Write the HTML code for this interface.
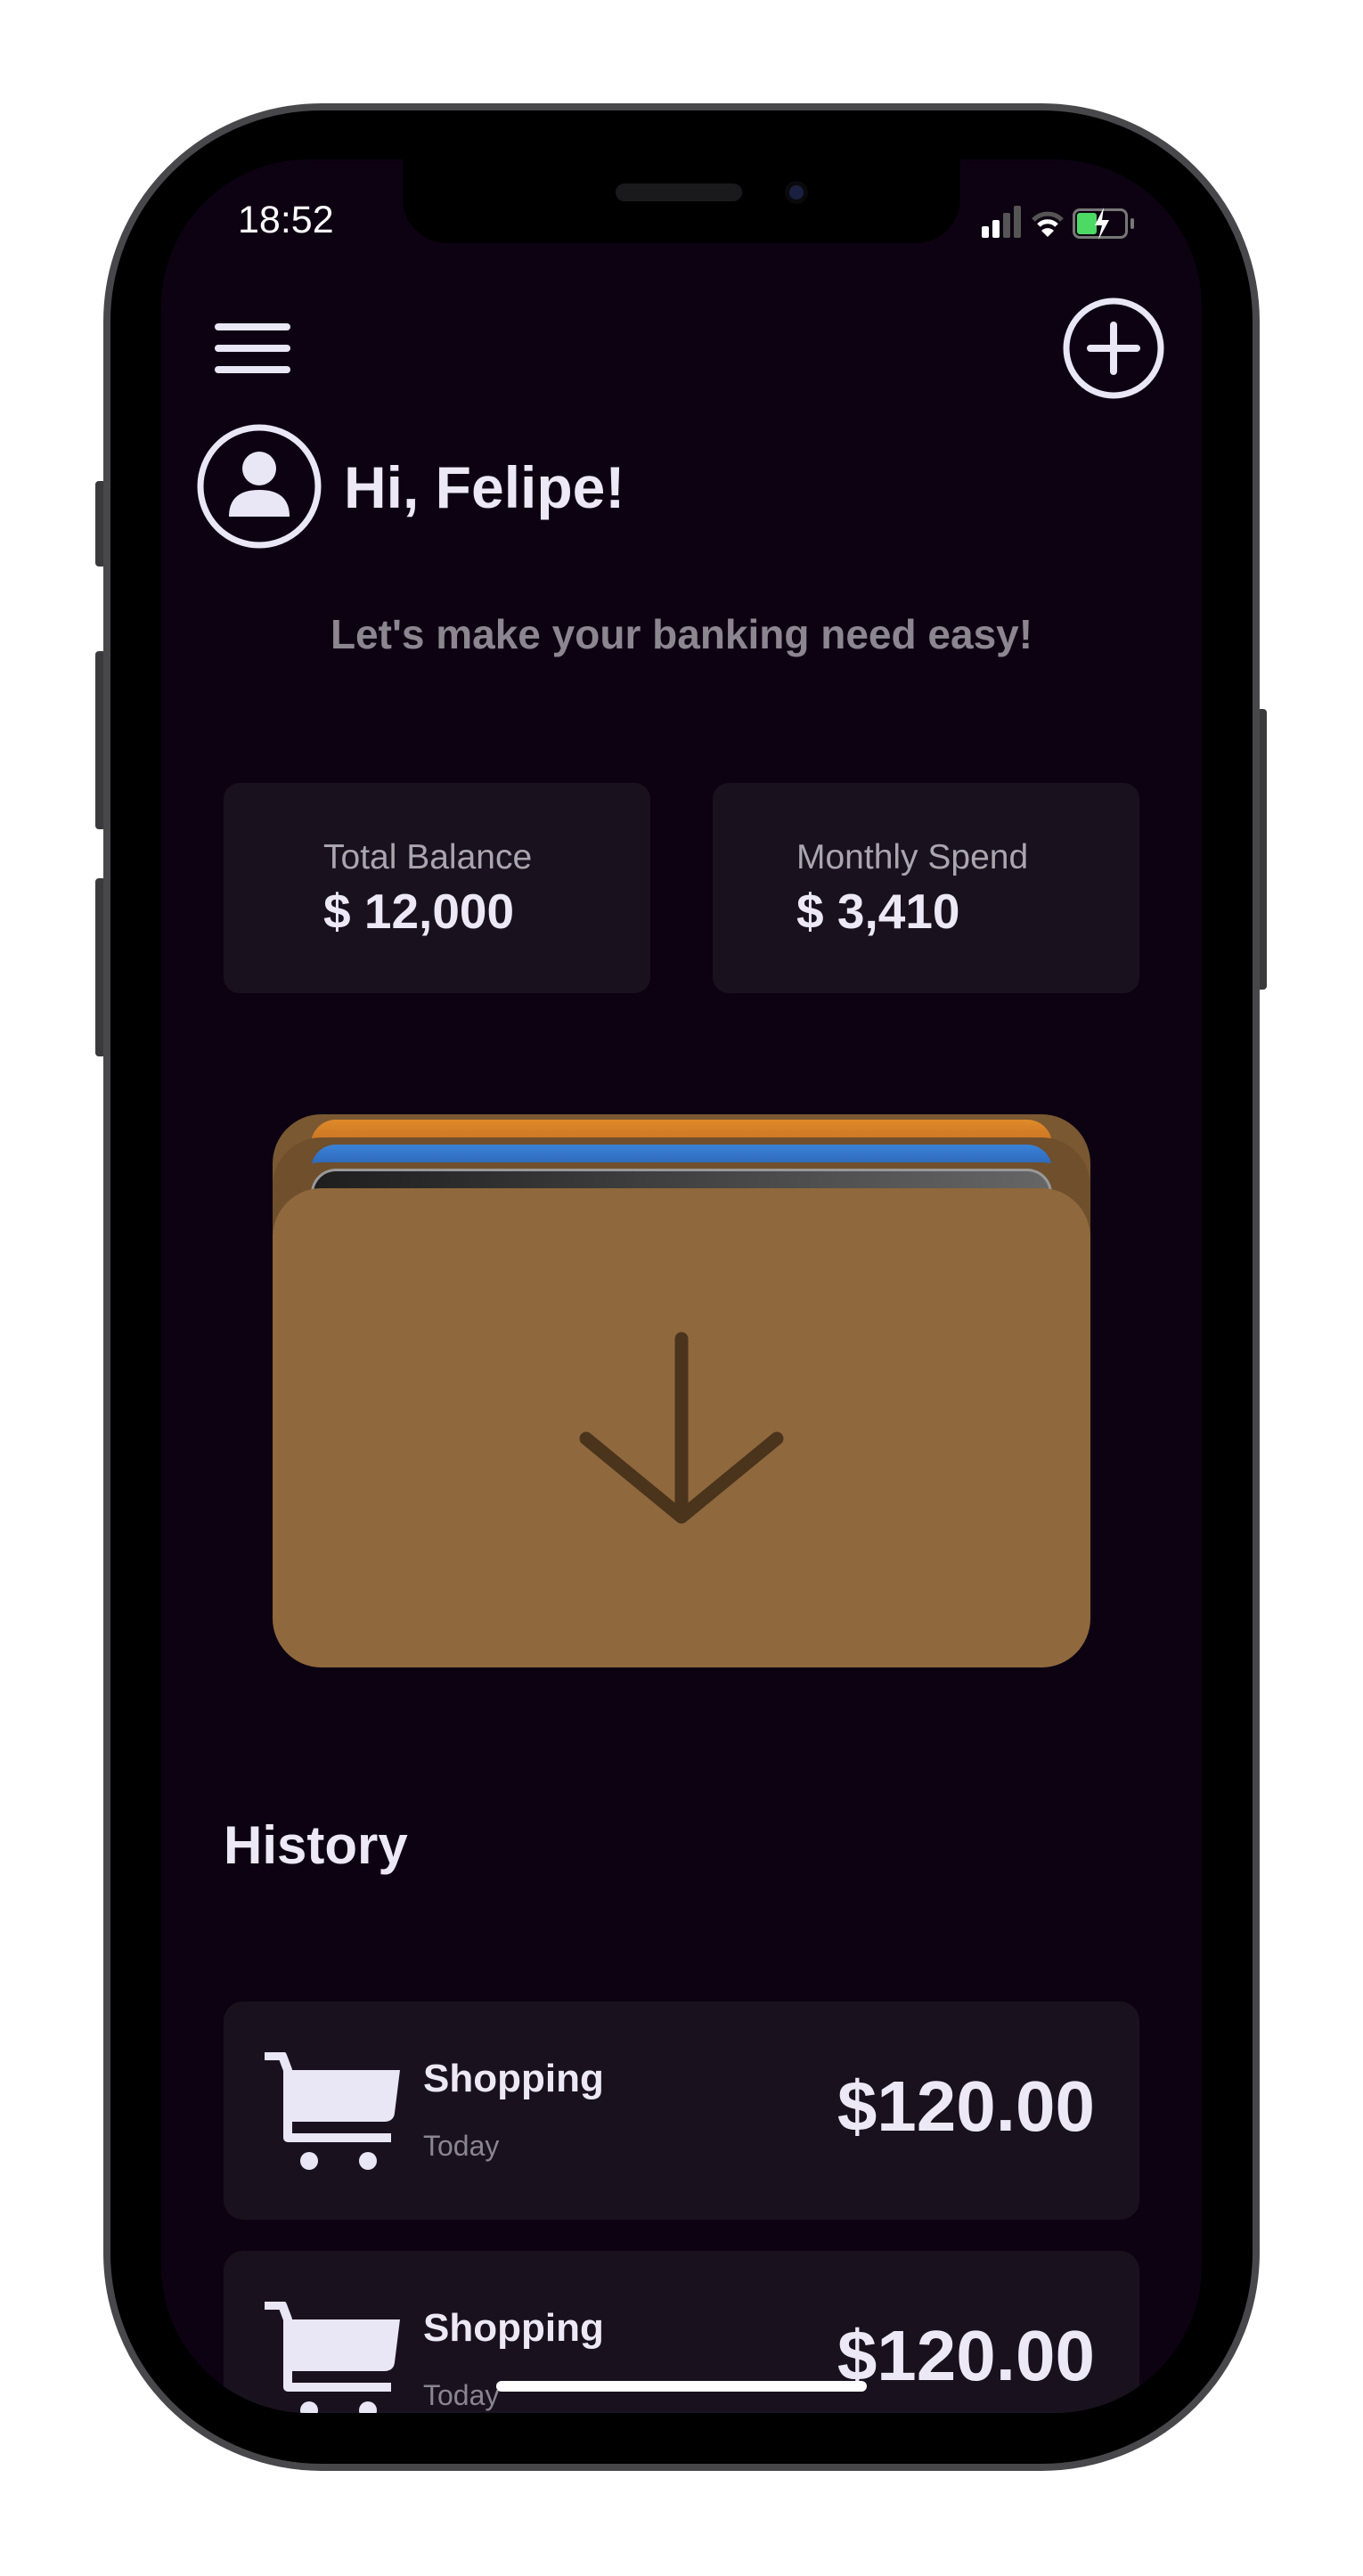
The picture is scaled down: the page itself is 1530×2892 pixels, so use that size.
<!DOCTYPE html>
<html><head><meta charset="utf-8"><style>
*{margin:0;padding:0;box-sizing:border-box}
body{width:1530px;height:2892px;background:#fff;position:relative;overflow:hidden;font-family:"Liberation Sans",sans-serif}
.a{position:absolute}
.btn{position:absolute;background:#3a3a3c;border-radius:4px}
.frame{left:116px;top:116px;width:1298px;height:2658px;border-radius:245px;background:#000;border:8px solid #48484b}
.screen{left:181px;top:179px;width:1168px;height:2530px;border-radius:165px;background:#0d0212;overflow:hidden}
.card{background:#1a111f;border-radius:18px}
.lbl{color:#aaa5ae;font-size:39px}
.val{color:#ece8f6;font-size:55px;font-weight:bold}
.row{left:70px;width:1028px;height:245px;background:#1a111f;border-radius:22px}
.shop{color:#ece8f6;font-size:44px;font-weight:bold}
.today{color:#8a8590;font-size:32px}
.amt{color:#ece8f6;font-size:80px;font-weight:bold;text-align:right}
</style></head><body>
<div class="btn" style="left:107px;top:540px;width:12px;height:96px"></div>
<div class="btn" style="left:107px;top:731px;width:12px;height:200px"></div>
<div class="btn" style="left:107px;top:986px;width:12px;height:200px"></div>
<div class="btn" style="left:1410px;top:796px;width:12px;height:315px"></div>
<div class="a frame"></div>
<div class="a screen">
  <div class="a" style="left:271px;top:-10px;width:626px;height:104px;background:#000;border-radius:0 0 50px 50px"></div>
  <div class="a" style="left:510px;top:27px;width:142px;height:20px;background:#1a1a1c;border-radius:10px"></div>
  <div class="a" style="left:700px;top:24px;width:26px;height:26px;background:#1b2040;border-radius:50%;border:5px solid #0a0a0c"></div>
  <div class="a" style="left:86px;top:44px;color:#fff;font-size:43px">18:52</div>
  <div class="a" style="left:921px;top:75px;width:8px;height:13px;background:#fff;border-radius:2px"></div>
  <div class="a" style="left:933px;top:68px;width:8px;height:20px;background:#fff;border-radius:2px"></div>
  <div class="a" style="left:945px;top:60px;width:8px;height:28px;background:#555;border-radius:2px"></div>
  <div class="a" style="left:957px;top:52px;width:8px;height:36px;background:#555;border-radius:2px"></div>
  <svg class="a" style="left:975px;top:54px" width="40" height="36" viewBox="0 0 40 36"><path d="M4 14 A22 22 0 0 1 36 14" stroke="#555" stroke-width="5" fill="none"/><path d="M10 20 A14 14 0 0 1 30 20" stroke="#fff" stroke-width="5" fill="none"/><path d="M20 33 L13 26 A10 10 0 0 1 27 26Z" fill="#fff"/></svg>
  <div class="a" style="left:1023px;top:55px;width:62px;height:34px;border:3px solid #777;border-radius:8px"></div>
  <div class="a" style="left:1028px;top:60px;width:22px;height:24px;background:#4cd964;border-radius:3px"></div>
  <div class="a" style="left:1088px;top:66px;width:4px;height:12px;background:#777;border-radius:2px"></div>
  <svg class="a" style="left:1044px;top:52px" width="24" height="40" viewBox="0 0 24 40"><path d="M14 2 L4 22 L12 22 L8 38 L20 16 L12 16Z" fill="#fff"/></svg>
  <div class="a" style="left:60px;top:184px;width:85px;height:8px;background:#e9e6f5;border-radius:4px"></div>
  <div class="a" style="left:60px;top:208px;width:85px;height:8px;background:#e9e6f5;border-radius:4px"></div>
  <div class="a" style="left:60px;top:232px;width:85px;height:8px;background:#e9e6f5;border-radius:4px"></div>
  <svg class="a" style="left:1009px;top:152px" width="120" height="120" viewBox="0 0 120 120"><circle cx="60" cy="60" r="53" stroke="#e9e6f5" stroke-width="7" fill="none"/><path d="M60 34V86M34 60H86" stroke="#e9e6f5" stroke-width="8" stroke-linecap="round"/></svg>
  <svg class="a" style="left:40px;top:297px" width="140" height="140" viewBox="0 0 140 140"><circle cx="70" cy="70" r="66" stroke="#e9e6f5" stroke-width="7" fill="none"/><circle cx="70" cy="50" r="19" fill="#e9e6f5"/><path d="M36 104 Q36 74 70 74 Q104 74 104 104Z" fill="#e9e6f5"/></svg>
  <div class="a" style="left:205px;top:330px;color:#ece8f6;font-size:66px;font-weight:bold">Hi, Felipe!</div>
  <div class="a" style="left:0;width:1168px;top:506px;text-align:center;color:#8c8690;font-size:46px;font-weight:bold">Let's make your banking need easy!</div>
  <div class="a card" style="left:70px;top:700px;width:479px;height:236px"></div>
  <div class="a card" style="left:619px;top:700px;width:479px;height:236px"></div>
  <div class="a lbl" style="left:182px;top:762px">Total Balance</div>
  <div class="a val" style="left:182px;top:812px">$ 12,000</div>
  <div class="a lbl" style="left:713px;top:762px">Monthly Spend</div>
  <div class="a val" style="left:713px;top:812px">$ 3,410</div>
  <div class="a" style="left:125px;top:1072px;width:918px;height:400px;background:#7a5832;border-radius:55px"></div>
  <div class="a" style="left:168px;top:1078px;width:832px;height:60px;background:linear-gradient(#e08a2a,#a8561c);border-radius:28px 28px 0 0"></div>
  <div class="a" style="left:125px;top:1098px;width:918px;height:400px;background:#6f4f2c;border-radius:55px"></div>
  <div class="a" style="left:168px;top:1106px;width:832px;height:60px;background:linear-gradient(#3a82d8,#1c3e86);border-radius:28px 28px 0 0"></div>
  <div class="a" style="left:125px;top:1126px;width:918px;height:400px;background:#6f4f2c;border-radius:55px"></div>
  <div class="a" style="left:168px;top:1133px;width:832px;height:60px;background:linear-gradient(90deg,#1e1e1e,#666);border:3px solid #999;border-bottom:none;border-radius:28px 28px 0 0"></div>
  <div class="a" style="left:125px;top:1155px;width:918px;height:538px;background:#8f683d;border-radius:55px"></div>
  <svg class="a" style="left:460px;top:1310px" width="250" height="240" viewBox="0 0 250 240"><path d="M124 14V214M17 126L124 214L231 126" stroke="#4a341c" stroke-width="15" stroke-linecap="round" stroke-linejoin="round" fill="none"/></svg>
  <div class="a" style="left:70px;top:1858px;color:#ece8f6;font-size:60px;font-weight:bold">History</div>
  <div class="a row" style="top:2068px"></div>
  <div class="a row" style="top:2348px;height:300px"></div>
  <svg class="a" style="left:112px;top:2125px" width="160" height="135" viewBox="0 0 160 135"><path d="M4 4H24L30 20V96H146" stroke="#e9e6f5" stroke-width="10" fill="none" stroke-linejoin="round"/><path d="M30 20H156L150 68Q149 78 138 78H30Z" fill="#e9e6f5"/><circle cx="54" cy="122" r="10" fill="#e9e6f5"/><circle cx="120" cy="122" r="10" fill="#e9e6f5"/></svg>
  <div class="a shop" style="left:294px;top:2130px">Shopping</div>
  <div class="a today" style="left:294px;top:2212px">Today</div>
  <div class="a amt" style="left:560px;width:488px;top:2140px">$120.00</div>
  <svg class="a" style="left:112px;top:2405px" width="160" height="135" viewBox="0 0 160 135"><path d="M4 4H24L30 20V96H146" stroke="#e9e6f5" stroke-width="10" fill="none" stroke-linejoin="round"/><path d="M30 20H156L150 68Q149 78 138 78H30Z" fill="#e9e6f5"/><circle cx="54" cy="122" r="10" fill="#e9e6f5"/><circle cx="120" cy="122" r="10" fill="#e9e6f5"/></svg>
  <div class="a shop" style="left:294px;top:2410px">Shopping</div>
  <div class="a today" style="left:294px;top:2492px">Today</div>
  <div class="a amt" style="left:560px;width:488px;top:2420px">$120.00</div>
  <div class="a" style="left:376px;top:2494px;width:416px;height:12px;background:#fff;border-radius:6px"></div>
</div>
</body></html>
